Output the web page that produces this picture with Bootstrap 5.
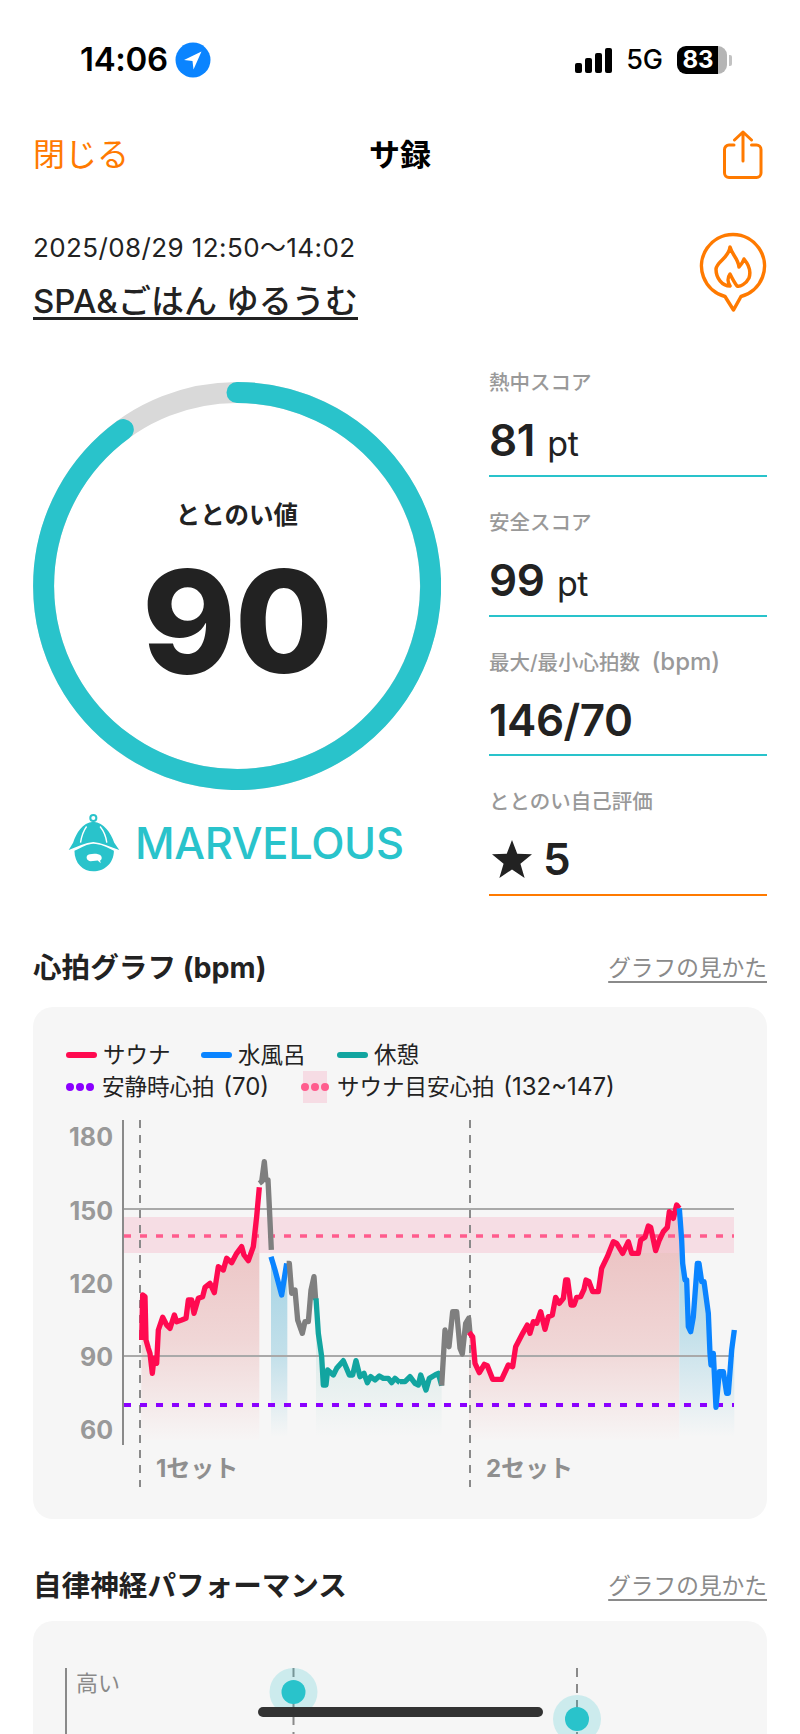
<!DOCTYPE html>
<html lang="ja">
<head>
  <meta charset="UTF-8">
  <meta name="viewport" content="width=device-width, initial-scale=1.0">
  <title>サ録</title>
  <link href="https://cdn.jsdelivr.net/npm/bootstrap@5.3.0/dist/css/bootstrap.min.css" rel="stylesheet">
  <style>
    body { font-family: Inter, "Noto Sans CJK JP", sans-serif; color: #222; background: #fff; overflow: hidden; }
    .screen { width: 800px; height: 1734px; overflow: hidden; position: relative; }

    .status-row { height: 118px; padding: 2px 68px 0 80px; color: #000; }
    .clock { font-size: 33px; font-weight: 600; letter-spacing: -.3px; }
    .loc-icon { margin-left: 7px; }
    .signal-bars { height: 25px; gap: 3px; }
    .signal-bars i { display: block; width: 7px; background: #000; border-radius: 2px; }
    .signal-bars i:nth-child(1) { height: 10px; }
    .signal-bars i:nth-child(2) { height: 15px; }
    .signal-bars i:nth-child(3) { height: 20px; }
    .signal-bars i:nth-child(4) { height: 25px; }
    .net { font-size: 27px; font-weight: 500; margin: 0 14px; }
    .batt { width: 50px; height: 28px; border-radius: 9px; color: #fff; font-size: 24px; font-weight: 700; background: linear-gradient(90deg, #000 83%, #b5b5b5 83%); line-height: 28px; padding-right: 8px; text-align: center; }
    .batt-nub { width: 3px; height: 11px; background: #c2c2c2; border-radius: 0 2px 2px 0; margin-left: 2px; }

    .nav-row { height: 74px; padding: 0 37px 0 33px; position: relative; }
    .nav-close { font-size: 32px; color: #ff7a00; line-height: 40px; }
    .nav-title { font-size: 31px; font-weight: 700; color: #000; line-height: 40px; position: absolute; left: 0; right: 0; text-align: center; }

    .visit-head { padding: 39px 32px 0 33px; height: 176px; }
    .visit-date { font-size: 26px; line-height: 34px; letter-spacing: .4px; }
    .visit-name { display: inline-block; font-size: 33px; font-weight: 500; line-height: 32px; margin-top: 20px; border-bottom: 3px solid #222; }

    .score-row { padding: 0 33px; }
    .ring-col { width: 408px; padding-top: 14px; }
    .ring-wrap { width: 408px; height: 408px; position: relative; }
    .ring-inner { position: absolute; inset: 0; }
    .ring-caption { font-size: 24.5px; font-weight: 700; line-height: 32px; margin-top: 117px; }
    .ring-value { font-size: 142px; font-weight: 800; line-height: 124px; letter-spacing: -1px; margin-top: 28px; }
    .rank-row { margin-top: 23px; padding-left: 34px; gap: 14px; }
    .rank-name { font-size: 43.4px; font-weight: 500; color: #29c3cb; line-height: 58px; letter-spacing: -.3px; }

    .stat-col { width: 278px; margin-left: 48px; }
    .stat-item { height: 109px; border-bottom: 2px solid #29c3cb; margin-bottom: 30.7px; }
    .stat-item:last-child { border-bottom-color: #ff7a00; margin-bottom: 0; }
    .stat-label { font-size: 20.5px; font-weight: 500; color: #999; line-height: 30px; }
    .stat-label-latin { font-size: 24px; margin-left: 5px; }
    .stat-value { font-size: 44px; font-weight: 600; line-height: 40px; margin-top: 22px; letter-spacing: -.5px; }
    .stat-unit { font-size: 34px; font-weight: 400; margin-left: 2px; }
    .stat-star { margin-left: 3px; margin-right: 11px; }

    .section-head { padding: 0 33px; height: 40px; }
    .section-first { margin-top: 52px; margin-bottom: 19px; }
    .section-second { margin-top: 47px; margin-bottom: 15px; }
    .section-title { font-size: 28.6px; font-weight: 700; line-height: 40px; }
    .guide-link { font-size: 22.7px; color: #8a8a8a; text-decoration: underline; text-underline-offset: 5px; line-height: 40px; }

    .sheet { background: #f6f6f6; border-radius: 20px; margin: 0 33px; }
    .hr-sheet { height: 512px; }
    .nerve-sheet { height: 200px; }
    .legend-box { padding: 32px 0 0 33px; font-size: 22.5px; line-height: 32px; height: 96px; }
    .legend-row { height: 32px; }
    .legend-latin { font-size: 24px; margin-left: 2px; }
    .legend-line { display: block; width: 31px; height: 6px; border-radius: 3px; margin-right: 6px; }
    .line-sauna { background: #ff0a50; }
    .line-water { background: #0a84ff; }
    .line-rest { background: #12a5a0; }
    .label-sauna { width: 98px; }
    .label-water { width: 99px; }
    .label-resting { width: 198px; }
    .legend-dots { display: flex; gap: 2px; width: 29px; margin-right: 7px; }
    .legend-dots i { display: block; width: 8px; height: 8px; border-radius: 50%; background: currentColor; }
    .dots-resting { color: #8b00ff; }
    .dots-target { color: #ff5c8d; }
    .legend-band { background: #f6dce4; height: 32px; width: 24px; display: flex; align-items: center; justify-content: center; margin: 0 10px 0 3px; }
    .legend-band .legend-dots { margin: 0; flex: none; }
    .chart-svg { display: block; margin-top: 7px; }
    .axis-num { font-size: 25px; font-weight: 700; fill: #999; font-family: Inter, sans-serif; }
    .set-num { font-size: 24px; font-weight: 700; fill: #8f8f8f; font-family: Inter, "Noto Sans CJK JP", sans-serif; }
    .low-label { font-size: 22px; fill: #8a8a8a; font-family: "Noto Sans CJK JP", sans-serif; }
    .home-bar { position: absolute; left: 258px; top: 1707px; width: 285px; height: 10px; background: #333; border-radius: 5px; }
  </style>
</head>
<body>
  <div class="screen">

    <!-- status bar -->
    <div class="status-row d-flex align-items-center justify-content-between">
      <div class="d-flex align-items-center">
        <span class="clock">14:06</span>
        <svg class="loc-icon" width="36" height="36" viewBox="0 0 36 36">
          <circle cx="18" cy="18" r="17.5" fill="#0a84ff"/>
          <path d="M26.5 9.5 L9 18 L17.5 19 L18.5 27.5 Z" fill="#fff"/>
        </svg>
      </div>
      <div class="d-flex align-items-center">
        <div class="signal-bars d-flex align-items-end">
          <i></i><i></i><i></i><i></i>
        </div>
        <span class="net">5G</span>
        <span class="batt">83</span>
        <span class="batt-nub"></span>
      </div>
    </div>

    <!-- top nav -->
    <div class="nav-row d-flex align-items-center justify-content-between">
      <span class="nav-close">閉じる</span>
      <span class="nav-title">サ録</span>
      <svg width="40" height="50" viewBox="0 0 40 50" fill="none" stroke="#ff7a00" stroke-width="3" stroke-linecap="round" stroke-linejoin="round">
        <path d="M11 15 H6 a4.5 4.5 0 0 0 -4.5 4.5 V43 a4.5 4.5 0 0 0 4.5 4.5 H33.500 a4.5 4.5 0 0 0 4.500 -4.500 V19.500 a4.500 4.500 0 0 0 -4.500 -4.500 H28.500"/>
        <path d="M20 31 V2 M11.500 10 L20 2 L28.500 10"/>
      </svg>
    </div>

    <!-- visit info -->
    <div class="visit-head d-flex justify-content-between">
      <div>
        <div class="visit-date">2025/08/29 12:50～14:02</div>
        <span class="visit-name">SPA&amp;ごはん ゆるうむ</span>
      </div>
      <svg width="70" height="82" viewBox="0 0 70 82" fill="none" stroke="#ff7a00" stroke-width="3.500" stroke-linejoin="round" stroke-linecap="round">
        <path d="M27 65.500 A31.500 31.500 0 1 1 43 65.500 L35.500 79 Z"/>
        <path d="M32 16 C34 24 40 27 41 36 C43 34 45 31 46 28 C51 34 53 41 51 47 C48 53 42 56 39 55 C36 51 34 47 32 43 C29 47 30 52 32 55 C24 55 18 47 18 38 C19 30 31 27 32 16 Z"/>
      </svg>
    </div>

    <!-- score + stats -->
    <div class="score-row d-flex">
      <div class="ring-col">
        <div class="ring-wrap">
          <svg width="408" height="408" viewBox="0 0 408 408" fill="none" stroke-width="21">
            <circle cx="204" cy="204" r="193.500" stroke="#d9d9d9"/>
            <path d="M204 10.500 A193.500 193.500 0 1 1 90.300 47.500" stroke="#29c3cb" stroke-linecap="round"/>
          </svg>
          <div class="ring-inner text-center">
            <div class="ring-caption">ととのい値</div>
            <div class="ring-value">90</div>
          </div>
        </div>
        <div class="rank-row d-flex align-items-center">
          <svg width="54" height="59" viewBox="50 40 160 175">
            <circle cx="128" cy="55" r="9" fill="none" stroke="#29c3cb" stroke-width="6"/>
            <path d="M128 66 C95 68 78 100 68 128 L55 150 C80 140 105 128 128 126 C150 128 178 140 205 150 L190 128 C180 100 160 68 128 66 Z" fill="#29c3cb"/>
            <path d="M108 80 C97 95 92 115 90 128 M148 80 C160 95 166 112 168 128" fill="none" stroke="#fff" stroke-width="4"/>
            <path d="M72 152 C95 142 110 131 128 131 C148 131 170 142 189 152 C189 190 160 213 128 213 C98 213 72 190 72 152 Z" fill="#29c3cb"/>
            <path d="M110 166 C114 160 143 158 150 166 C155 172 153 179 148 181 L150 189 L141 181 L120 183 C108 181 106 172 110 166 Z" fill="#fff"/>
          </svg>
          <span class="rank-name">MARVELOUS</span>
        </div>
      </div>

      <div class="stat-col">
        <div class="stat-item">
          <div class="stat-label">熱中スコア</div>
          <div class="stat-value">81 <span class="stat-unit">pt</span></div>
        </div>
        <div class="stat-item">
          <div class="stat-label">安全スコア</div>
          <div class="stat-value">99 <span class="stat-unit">pt</span></div>
        </div>
        <div class="stat-item">
          <div class="stat-label">最大/最小心拍数<span class="stat-label-latin"> (bpm)</span></div>
          <div class="stat-value">146/70</div>
        </div>
        <div class="stat-item">
          <div class="stat-label">ととのい自己評価</div>
          <div class="stat-value d-flex align-items-center">
            <svg class="stat-star" width="40" height="38" viewBox="0 0 38 36"><path d="M19 0 L24 13 L38 13.500 L27 22.500 L31 36 L19 28 L7 36 L11 22.500 L0 13.500 L14 13 Z" fill="#222"/></svg>
            <span>5</span>
          </div>
        </div>
      </div>
    </div>

    <!-- heart rate -->
    <div class="section-head section-first d-flex justify-content-between align-items-center">
      <span class="section-title">心拍グラフ (bpm)</span>
      <span class="guide-link">グラフの見かた</span>
    </div>
    <div class="sheet hr-sheet">
      <div class="legend-box">
        <div class="legend-row d-flex align-items-center">
          <span class="legend-line line-sauna"></span><span class="label-sauna">サウナ</span>
          <span class="legend-line line-water"></span><span class="label-water">水風呂</span>
          <span class="legend-line line-rest"></span><span>休憩</span>
        </div>
        <div class="legend-row d-flex align-items-center">
          <span class="legend-dots dots-resting"><i></i><i></i><i></i></span><span class="label-resting">安静時心拍<span class="legend-latin"> (70)</span></span>
          <span class="legend-band"><span class="legend-dots dots-target"><i></i><i></i><i></i></span></span><span>サウナ目安心拍<span class="legend-latin"> (132~147)</span></span>
        </div>
      </div>

      <svg class="chart-svg" width="734" height="390" viewBox="33 1110 734 390" fill="none">
        <defs>
          <linearGradient id="fillRed" x1="0" y1="0" x2="0" y2="1"><stop offset="0" stop-color="#eabcbc"/><stop offset=".6" stop-color="#f0d6d6"/><stop offset="1" stop-color="#f7f5f5"/></linearGradient>
          <linearGradient id="fillBlue" x1="0" y1="0" x2="0" y2="1"><stop offset="0" stop-color="#a5d3e4"/><stop offset=".55" stop-color="#c3e0ea"/><stop offset="1" stop-color="#f6f6f6"/></linearGradient>
          <linearGradient id="fillTeal" x1="0" y1="0" x2="0" y2="1"><stop offset="0" stop-color="#cfe6e4"/><stop offset="1" stop-color="#f6f6f6"/></linearGradient>
          <linearGradient id="fillTealLow" x1="0" y1="0" x2="0" y2="1"><stop offset="0" stop-color="#e4eeed"/><stop offset="1" stop-color="#f6f6f6"/></linearGradient>
        </defs>

        <!-- left half, in 1/3 px units -->
        <g transform="translate(30 1000) scale(.33333)">
          <polygon fill="url(#fillRed)" points="333,1320 335,1020 338,885 345,890 348,1020 355,1045 360,1060 367,1120 372,1075 380,1090 385,990 398,952 410,975 420,985 433,945 440,965 455,960 468,955 475,900 485,900 492,940 505,895 518,890 525,862 540,850 553,878 565,800 580,810 590,775 605,788 620,760 635,740 642,765 655,782 670,740 680,650 688,562 688,1320"/>
          <polygon fill="url(#fillBlue)" points="723,1310 723,770 735,810 755,885 772,790 772,1310"/>
          <polygon fill="url(#fillTeal)" points="858,1310 858,895 865,1000 875,1070 880,1155 888,1155 893,1110 910,1125 920,1105 940,1082 958,1125 968,1125 978,1082 990,1130 1002,1120 1012,1148 1022,1130 1035,1140 1048,1128 1060,1135 1075,1135 1085,1148 1095,1135 1110,1148 1110,1310"/>
        </g>
        <g transform="translate(400 1100) scale(.33333)">
          <polygon fill="url(#fillTealLow)" points="0,1010 0,845 15,845 30,830 45,850 55,855 62,825 78,870 88,835 105,825 115,820 125,857 125,1010"/>
          <polygon fill="url(#fillRed)" points="207,1020 207,697 218,710 225,790 238,818 253,793 262,797 278,838 305,838 325,795 338,800 347,740 368,700 382,675 390,700 400,665 410,670 422,635 435,688 445,650 457,645 467,592 478,610 490,595 497,540 503,540 513,615 522,615 530,592 542,590 552,568 558,540 567,545 578,575 595,575 605,505 622,470 640,425 650,430 668,460 685,425 695,460 715,460 722,420 735,412 745,378 752,382 767,452 778,420 790,395 802,382 808,335 820,355 830,315 838,325 838,1020"/>
          <polygon fill="url(#fillBlue)" points="838,1010 838,325 845,420 848,490 855,540 860,540 865,680 872,695 880,650 892,490 897,490 905,545 912,545 925,640 930,760 933,795 940,760 948,922 958,815 970,815 980,880 985,880 995,750 1003,690 1003,1010"/>
        </g>

        <!-- target band and grid -->
        <rect x="124" y="1217" width="610" height="36" fill="#f6c9d6" opacity=".55"/>
        <path d="M124 1209 H734 M124 1356 H734" stroke="#a9a9a9" stroke-width="2"/>
        <path d="M123 1120 V1445" stroke="#8a8a8a" stroke-width="2"/>
        <path d="M140 1120 V1487 M470 1120 V1487" stroke="#8a8a8a" stroke-width="2" stroke-dasharray="8 7"/>
        <path d="M124 1236 H734" stroke="#ff5c8d" stroke-width="3.500" stroke-dasharray="7 9"/>
        <path d="M124 1405 H734" stroke="#8b00ff" stroke-width="4" stroke-dasharray="7 9"/>

        <!-- heart rate line -->
        <g transform="translate(30 1000) scale(.33333)" stroke-width="16" stroke-linejoin="round">
          <polyline stroke="#ff0a50" points="335,1020 338,885 345,890 348,1020 355,1045 360,1060 367,1120 372,1075 380,1090 385,990 398,952 410,975 420,985 433,945 440,965 455,960 468,955 475,900 485,900 492,940 505,895 518,890 525,862 540,850 553,878 565,800 580,810 590,775 605,788 620,760 635,740 642,765 655,782 670,740 680,650 688,562"/>
          <polyline stroke="#7f7f7f" points="688,550 695,545 703,485 708,540 714,540 718,620 724,750"/>
          <polyline stroke="#0a84ff" points="723,770 735,810 755,885 770,790"/>
          <polyline stroke="#7f7f7f" points="770,790 778,790 785,880 795,870 803,960 817,1000 825,965 835,965 843,870 852,830 857,900"/>
          <polyline stroke="#12a5a0" points="858,895 865,1000 875,1070 880,1155 888,1155 893,1110 910,1125 920,1105 940,1082 958,1125 968,1125 978,1082 990,1130 1002,1120 1012,1148 1022,1130 1035,1140 1048,1128 1060,1135 1075,1135 1085,1148 1095,1135 1110,1148"/>
        </g>
        <g transform="translate(400 1100) scale(.33333)" stroke-width="16" stroke-linejoin="round">
          <polyline stroke="#12a5a0" points="0,845 15,845 30,830 45,850 55,855 62,825 78,870 88,835 105,825 115,820 125,857"/>
          <polyline stroke="#7f7f7f" points="125,857 135,690 147,740 158,635 170,635 180,745 187,762 197,670 206,655 210,700"/>
          <polyline stroke="#ff0a50" points="207,697 218,710 225,790 238,818 253,793 262,797 278,838 305,838 325,795 338,800 347,740 368,700 382,675 390,700 400,665 410,670 422,635 435,688 445,650 457,645 467,592 478,610 490,595 497,540 503,540 513,615 522,615 530,592 542,590 552,568 558,540 567,545 578,575 595,575 605,505 622,470 640,425 650,430 668,460 685,425 695,460 715,460 722,420 735,412 745,378 752,382 767,452 778,420 790,395 802,382 808,335 820,355 830,315 838,325"/>
          <polyline stroke="#0a84ff" points="838,325 845,420 848,490 855,540 860,540 865,680 872,695 880,650 892,490 897,490 905,545 912,545 925,640 930,760 933,795 940,760 948,922 958,815 970,815 980,880 985,880 995,750 1003,690"/>
        </g>

        <text class="axis-num" x="113" y="1146" text-anchor="end">180</text>
        <text class="axis-num" x="113" y="1220" text-anchor="end">150</text>
        <text class="axis-num" x="113" y="1293" text-anchor="end">120</text>
        <text class="axis-num" x="113" y="1366" text-anchor="end">90</text>
        <text class="axis-num" x="113" y="1439" text-anchor="end">60</text>
        <text class="set-num" x="156" y="1477">1セット</text>
        <text class="set-num" x="486" y="1477">2セット</text>
      </svg>
    </div>

    <!-- autonomic nerve -->
    <div class="section-head section-second d-flex justify-content-between align-items-center">
      <span class="section-title">自律神経パフォーマンス</span>
      <span class="guide-link">グラフの見かた</span>
    </div>
    <div class="sheet nerve-sheet">
      <svg class="d-block" width="734" height="113" viewBox="33 1621 734 113" fill="none">
        <path d="M66 1668 V1734" stroke="#8a8a8a" stroke-width="2"/>
        <path d="M293.500 1668 V1734 M577 1668 V1734" stroke="#8a8a8a" stroke-width="2" stroke-dasharray="9 7"/>
        <circle cx="293.500" cy="1692" r="24" fill="#29c3cb" opacity=".2"/>
        <circle cx="293.500" cy="1692" r="12" fill="#29c3cb"/>
        <circle cx="577" cy="1719" r="24" fill="#29c3cb" opacity=".2"/>
        <circle cx="577" cy="1719" r="12" fill="#29c3cb"/>
        <text class="low-label" x="76" y="1691">高い</text>
      </svg>
    </div>

    <div class="home-bar"></div>
  </div>

  <script src="https://cdn.jsdelivr.net/npm/bootstrap@5.3.0/dist/js/bootstrap.bundle.min.js"></script>
</body>
</html>
